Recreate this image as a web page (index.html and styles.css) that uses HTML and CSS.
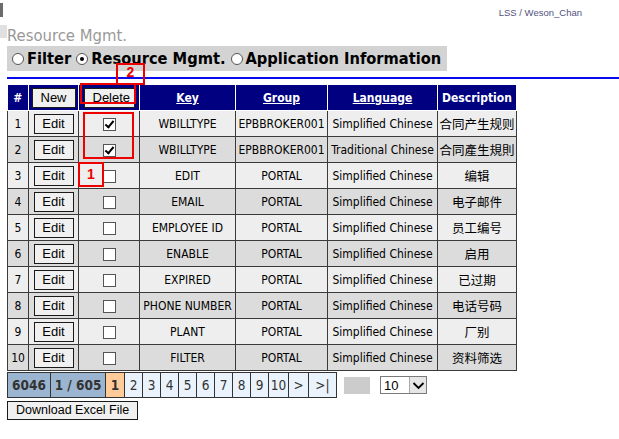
FILE: index.html
```html
<!DOCTYPE html>
<html>
<head>
<meta charset="utf-8">
<link rel="stylesheet" href="styles.css">
</head>
<body>
<div class="page">
  <div class="topbar">
    <span class="mark"></span>
    <span class="user">LSS / Weson_Chan</span>
  </div>
  <div class="titlerow">
    <span class="tsq"></span>
    <span class="title">Resource Mgmt.</span>
  </div>
  <div class="tabs">
    <label class="tab"><span class="radio"></span>Filter</label>
    <label class="tab"><span class="radio on"></span>Resource Mgmt.</label>
    <label class="tab"><span class="radio"></span>Application Information</label>
  </div>
  <div class="rule"></div>

  <table class="grid">
    <colgroup>
      <col class="c-num"><col class="c-edit"><col class="c-del"><col class="c-key"><col class="c-grp"><col class="c-lang"><col class="c-desc">
    </colgroup>
    <thead>
      <tr>
        <th>#</th>
        <th><span class="btn hbtn">New</span></th>
        <th><span class="btn hbtn del">Delete</span></th>
        <th><a>Key</a></th>
        <th><a>Group</a></th>
        <th><a>Language</a></th>
        <th>Description</th>
      </tr>
    </thead>
    <tbody>
      <tr><td>1</td><td><span class="btn">Edit</span></td><td><span class="cb checked"></span></td><td>WBILLTYPE</td><td>EPBBROKER001</td><td>Simplified Chinese</td><td class="zh">合同产生规则</td></tr>
      <tr><td>2</td><td><span class="btn">Edit</span></td><td><span class="cb checked"></span></td><td>WBILLTYPE</td><td>EPBBROKER001</td><td>Traditional Chinese</td><td class="zh">合同產生規則</td></tr>
      <tr><td>3</td><td><span class="btn">Edit</span></td><td><span class="cb"></span></td><td>EDIT</td><td>PORTAL</td><td>Simplified Chinese</td><td class="zh">编辑</td></tr>
      <tr><td>4</td><td><span class="btn">Edit</span></td><td><span class="cb"></span></td><td>EMAIL</td><td>PORTAL</td><td>Simplified Chinese</td><td class="zh">电子邮件</td></tr>
      <tr><td>5</td><td><span class="btn">Edit</span></td><td><span class="cb"></span></td><td>EMPLOYEE ID</td><td>PORTAL</td><td>Simplified Chinese</td><td class="zh">员工编号</td></tr>
      <tr><td>6</td><td><span class="btn">Edit</span></td><td><span class="cb"></span></td><td>ENABLE</td><td>PORTAL</td><td>Simplified Chinese</td><td class="zh">启用</td></tr>
      <tr><td>7</td><td><span class="btn">Edit</span></td><td><span class="cb"></span></td><td>EXPIRED</td><td>PORTAL</td><td>Simplified Chinese</td><td class="zh">已过期</td></tr>
      <tr><td>8</td><td><span class="btn">Edit</span></td><td><span class="cb"></span></td><td>PHONE NUMBER</td><td>PORTAL</td><td>Simplified Chinese</td><td class="zh">电话号码</td></tr>
      <tr><td>9</td><td><span class="btn">Edit</span></td><td><span class="cb"></span></td><td>PLANT</td><td>PORTAL</td><td>Simplified Chinese</td><td class="zh">厂别</td></tr>
      <tr><td>10</td><td><span class="btn">Edit</span></td><td><span class="cb"></span></td><td>FILTER</td><td>PORTAL</td><td>Simplified Chinese</td><td class="zh">资料筛选</td></tr>
    </tbody>
  </table>

  <div class="pagerrow">
    <table class="pager">
      <tr>
        <td class="info w42">6046</td>
        <td class="info w54">1 / 605</td>
        <td class="cur w18">1</td>
        <td class="w17">2</td><td class="w17">3</td><td class="w17">4</td><td class="w17">5</td><td class="w17">6</td><td class="w17">7</td><td class="w17">8</td><td class="w17">9</td>
        <td class="w19">10</td>
        <td class="w19">&gt;</td><td class="w27">&gt;|</td>
      </tr>
    </table>
    <span class="gray"></span>
    <span class="select"><span class="val">10</span><span class="arrow"><svg width="13" height="9" viewBox="0 0 13 9"><path d="M1.5 2 L6.5 7 L11.5 2" fill="none" stroke="#000" stroke-width="1.8"/></svg></span></span>
  </div>
  <div class="dl"><span class="btn dlbtn">Download Excel File</span></div>

  <div class="anno a2"><span>2</span></div>
  <div class="anno adel"></div>
  <div class="anno acb"></div>
  <div class="anno a1"><span>1</span></div>
</div>
</body>
</html>
```

FILE: styles.css
```css
html, body { margin: 0; padding: 0; background: #fff; }
.page { position: relative; width: 619px; height: 439px; overflow: hidden; font-family: "DejaVu Sans Condensed", "DejaVu Sans", sans-serif; }

.topbar { display: flex; justify-content: space-between; height: 20px; }
.mark { display: block; width: 3px; height: 14px; margin-top: 3px; background: #6b6b6b; }
.user { font-family: "Liberation Sans", Arial, sans-serif; font-size: 9.5px; color: #52527e; margin-top: 7px; margin-right: 37px; }

.titlerow { display: flex; align-items: flex-start; height: 26px; }
.tsq { display: block; width: 7px; height: 13px; margin-top: 5px; background: #e0e0e0; }
.title { font-size: 16.5px; color: #999; line-height: 20px; margin-top: 6px; white-space: nowrap; }

.tabs { display: flex; align-items: center; margin-left: 7px; width: 440px; height: 25px; background: #d3d3d3; white-space: nowrap; }
.tab { display: flex; flex-shrink: 0; align-items: center; font-weight: bold; font-size: 16.3px; color: #000; margin-left: 5px; white-space: nowrap; }
.radio { display: inline-block; flex-shrink: 0; width: 12px; height: 12px; border: 1px solid #555; border-radius: 50%; background: #fff; margin-right: 3px; position: relative; box-sizing: border-box; }
.radio.on::after { content: ""; position: absolute; left: 3px; top: 3px; width: 4px; height: 4px; border-radius: 50%; background: #000; }

.rule { margin: 6px 0 0 7px; height: 2px; background: #0a0af0; }

.grid { margin: 6px 0 0 7px; border-collapse: collapse; table-layout: fixed; width: 509px; font-size: 12px; }
.c-num { width: 21px; } .c-edit { width: 50px; } .c-del { width: 61px; } .c-key { width: 96px; }
.c-grp { width: 92px; } .c-lang { width: 110px; } .c-desc { width: 79px; }
.grid th { background: #000080; color: #fff; font-weight: bold; height: 25px; padding: 0; border: 1px solid #fff; border-top: 0; text-align: center; }
.grid th:first-child { border-left: 0; }
.grid th a { color: #fff; text-decoration: underline; }
.grid td { height: 25px; padding: 0; border: 1px solid #3a3a3a; text-align: center; color: #000; white-space: nowrap; }
.grid tbody tr:nth-child(odd) td { background: #eeeeee; }
.grid tbody tr:nth-child(even) td { background: #dcdcdc; }
.grid td.zh { font-family: "Noto Sans CJK SC", sans-serif; font-size: 12.5px; }

.btn { display: inline-block; box-sizing: border-box; font-family: "Liberation Sans", Arial, sans-serif; font-size: 13px; line-height: 17px; height: 20px; padding: 0 8px; background: #f0f0f0; border: 1px solid #1a1a1a; color: #000; font-weight: normal; white-space: nowrap; }
.grid td .btn { width: 40px; padding: 0; }
.hbtn { width: 44px; }
.hbtn.del { width: 51px; }

.cb { display: inline-block; width: 13px; height: 13px; box-sizing: border-box; border: 1px solid #555; background: #fff; vertical-align: middle; position: relative; }
.cb.checked::after { content: ""; position: absolute; left: 3.5px; top: 0.5px; width: 3px; height: 7px; border: solid #000; border-width: 0 2px 2px 0; transform: rotate(40deg); }

.pagerrow { display: flex; align-items: center; margin: 1px 0 0 7px; }
.pager { border-collapse: collapse; font-size: 13.5px; }
.pager td { height: 24px; padding: 0; border: 1px solid #333; background: #eaf2fb; color: #333; text-align: center; white-space: nowrap; }
.pager td.info { background: #9bb4d0; font-weight: bold; }
.pager td.cur { background: #ffcc99; font-weight: bold; }
.w17 { width: 17px; } .w18 { width: 18px; } .w19 { width: 19px; } .w27 { width: 27px; } .w42 { width: 42px; } .w54 { width: 54px; }
.gray { display: block; width: 26px; height: 17px; margin-left: 7px; background: #cccccc; }
.select { display: flex; align-items: center; width: 47px; height: 18px; margin-left: 10px; box-sizing: border-box; border: 1px solid #7a7a7a; background: #fff; }
.select .val { flex: 1; font-family: "Liberation Sans", Arial, sans-serif; font-size: 13px; color: #000; text-align: left; padding-left: 3px; }
.select .arrow { display: flex; align-items: center; justify-content: center; width: 16px; height: 16px; background: #e6e6e6; border-left: 1px solid #aaa; }

.dl { margin: 1px 0 0 7px; }
.dlbtn { height: 19px; line-height: 16px; padding: 0 8px; font-size: 12.5px; }

.anno { position: absolute; border: 2px solid #e00; box-sizing: border-box; }
.anno span { display: block; text-align: center; color: #e00; font-family: "Liberation Sans", Arial, sans-serif; font-weight: bold; font-size: 14px; line-height: 14px; }
.a2 { left: 116px; top: 63px; width: 29px; height: 22px; }
.adel { left: 80px; top: 83px; width: 56px; height: 21px; }
.acb { left: 83px; top: 112px; width: 51px; height: 47px; }
.a1 { left: 78px; top: 162px; width: 26px; height: 25px; }
.a1 span { margin-top: 3px; }
```
